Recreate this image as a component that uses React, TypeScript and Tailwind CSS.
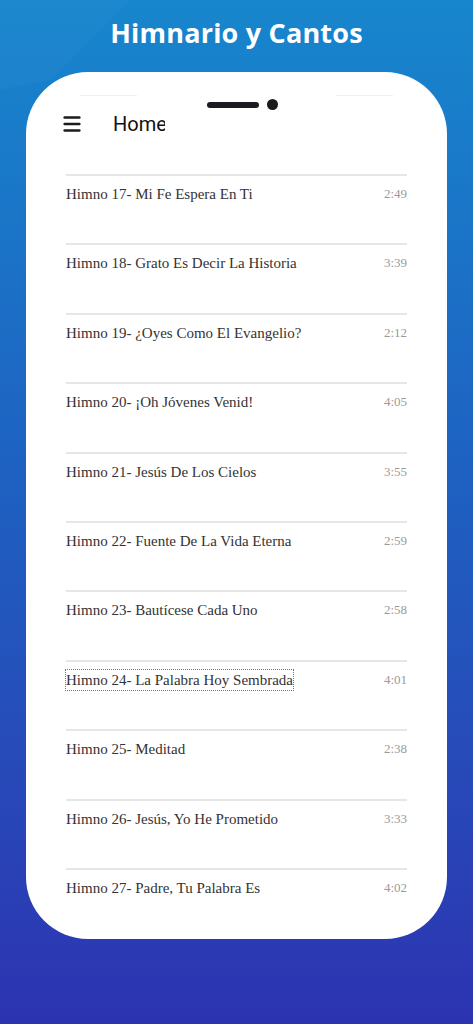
import { Menu } from "lucide-react";

const hymns = [
  { title: "Himno 17- Mi Fe Espera En Ti", time: "2:49" },
  { title: "Himno 18- Grato Es Decir La Historia", time: "3:39" },
  { title: "Himno 19- ¿Oyes Como El Evangelio?", time: "2:12" },
  { title: "Himno 20- ¡Oh Jóvenes Venid!", time: "4:05" },
  { title: "Himno 21- Jesús De Los Cielos", time: "3:55" },
  { title: "Himno 22- Fuente De La Vida Eterna", time: "2:59" },
  { title: "Himno 23- Bautícese Cada Uno", time: "2:58" },
  { title: "Himno 24- La Palabra Hoy Sembrada", time: "4:01", focused: true },
  { title: "Himno 25- Meditad", time: "2:38" },
  { title: "Himno 26- Jesús, Yo He Prometido", time: "3:33" },
  { title: "Himno 27- Padre, Tu Palabra Es", time: "4:02" },
];

const App = () => {
  return (
    <div className="relative w-[473px] h-[1024px] overflow-hidden bg-gradient-to-b from-[#1786cd] via-[#1f5ec0] to-[#2c33b1]">
      {/* lighter diagonal wedge top-left */}
      <svg className="absolute left-0 top-0" width="140" height="90" viewBox="0 0 140 90">
        <polygon points="0,0 130,0 50,80 0,90" fill="#ffffff" fillOpacity="0.025" />
      </svg>

      <div className="relative flex flex-col items-center">
        <h1
          className="pt-[14px] text-[27px] leading-[38px] font-bold text-white tracking-[0.2px]"
          style={{ fontFamily: '"Open Sans", "Liberation Sans", sans-serif' }}
        >
          Himnario y Cantos
        </h1>

        <div className="mt-[20px] w-[421px] h-[867px] rounded-[62px] bg-white overflow-hidden">
          {/* notch */}
          <div className="relative h-[43px]">
            <div className="absolute left-[54px] top-[23px] w-[57px] h-px bg-[#e8f2fb]" />
            <div className="absolute right-[54px] top-[23px] w-[57px] h-px bg-[#e8f2fb]" />
            <div className="flex items-center justify-center gap-[8px] pt-[27px] pl-[11px]">
              <div className="w-[52px] h-[6px] rounded-full bg-[#1a1a1f]" />
              <div className="w-[11px] h-[11px] rounded-full bg-[#1a1a1f]" />
            </div>
          </div>

          {/* header */}
          <div className="flex items-center h-[18px] pl-[35px]">
            <Menu size={22} strokeWidth={2.8} className="text-[#1a1a1a]" />
            <div className="ml-[30px] w-[52px] overflow-hidden">
              <span
                className="block text-[20px] leading-[24px] text-[#111] whitespace-nowrap"
                style={{ fontFamily: "Roboto, sans-serif" }}
              >
                Home
              </span>
            </div>
          </div>

          {/* list */}
          <div className="mt-[41px] mx-[40px]">
            {hymns.map((h) => (
              <div key={h.title} className="h-[69.4px] border-t-2 border-[#e6e6e6] pt-[8px]">
                <div
                  className="flex items-center justify-between leading-[20px]"
                  style={{ fontFamily: '"Liberation Serif", serif' }}
                >
                  <span
                    className={
                      "text-[15px] text-[#333] " +
                      (h.focused ? "outline outline-1 outline-dotted outline-[#777]" : "")
                    }
                  >
                    {h.title}
                  </span>
                  <span className="text-[13px] text-[#9a9a9a]">{h.time}</span>
                </div>
              </div>
            ))}
          </div>
        </div>
      </div>
    </div>
  );
};

export default App;
